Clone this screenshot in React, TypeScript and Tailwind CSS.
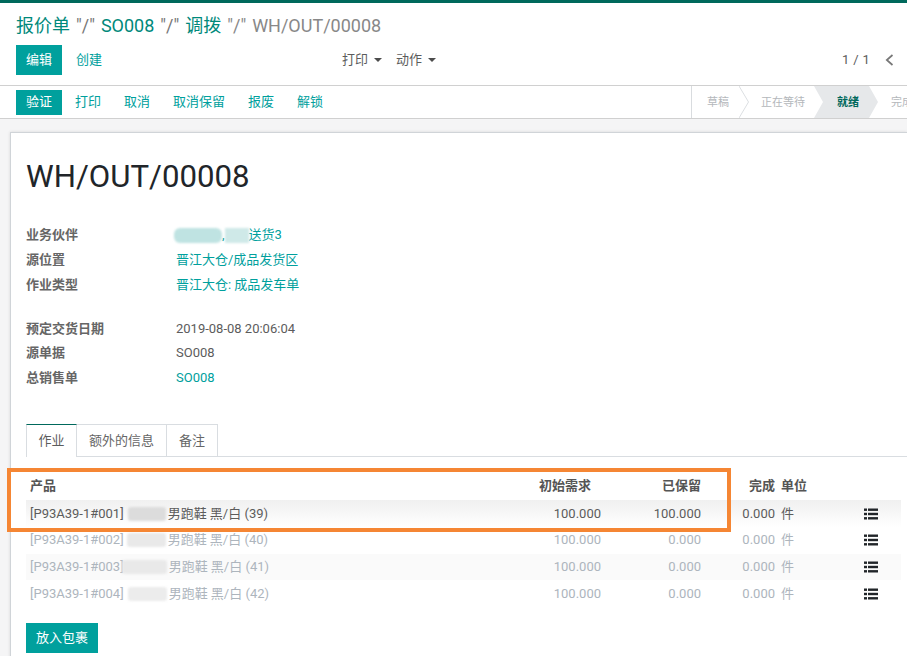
// ── Data ─────────────────────────────────────────────────────────────────────

const partnerFields = [
  { label: "源位置", value: "晋江大仓/成品发货区" },
  { label: "作业类型", value: "晋江大仓: 成品发车单" },
];

const rows = [
  { code: "[P93A39-1#001]", name: "男跑鞋 黑/白 (39)", reserved: "100.000", active: true, blur: "ml-[4px] w-[38px] bg-[#dcdcdc]" },
  { code: "[P93A39-1#002]", name: "男跑鞋 黑/白 (40)", reserved: "0.000", active: false, blur: "ml-[3px] w-[39px] bg-[#e9e9e9]" },
  { code: "[P93A39-1#003]", name: "男跑鞋 黑/白 (41)", reserved: "0.000", active: false, blur: "-ml-[2px] w-[45px] bg-[#e9e9e9]" },
  { code: "[P93A39-1#004]", name: "男跑鞋 黑/白 (42)", reserved: "0.000", active: false, blur: "ml-[4px] w-[39px] bg-[#ececec]" },
];

const actions = ["打印", "取消", "取消保留", "报废", "解锁"];

function ListIcon() {
  return (
    <svg width="14" height="12" viewBox="0 0 14 12" fill="#212529">
      <rect x="0" y="0.5" width="3" height="2.4" />
      <rect x="4" y="0.5" width="10" height="2.4" />
      <rect x="0" y="4.8" width="3" height="2.4" />
      <rect x="4" y="4.8" width="10" height="2.4" />
      <rect x="0" y="9.1" width="3" height="2.4" />
      <rect x="4" y="9.1" width="10" height="2.4" />
    </svg>
  );
}

// ── Component ────────────────────────────────────────────────────────────────

export default function App() {
  return (
    <div className="relative h-[656px] w-[907px] overflow-hidden bg-white font-['Roboto','Noto_Sans_CJK_SC',sans-serif] text-[13px] text-[#5c5c5c]">
      <div className="h-[3px] bg-[#00695c]" />

      {/* Control panel */}
      <div className="pl-4 pr-[13px] pt-[13px]">
        <div className="h-[20px] text-[18px] leading-[20px] text-[#00897b] [word-spacing:1.5px]">
          报价单 <span className="text-[#777]">"/"</span> SO008 <span className="text-[#777]">"/"</span> 调拨{" "}
          <span className="text-[#888]">"/" WH/OUT/00008</span>
        </div>
        <div className="mt-[9px] flex h-[40px] items-start">
          <button className="h-[30px] w-[46px] bg-[#00a09d] text-white">编辑</button>
          <button className="ml-[14px] h-[30px] text-[#00a09d]">创建</button>
          <div className="ml-[240px] flex h-[30px] items-center text-[#5c5c5c]">
            打印<span className="ml-[6px] mr-[14px] border-x-[4px] border-t-[4px] border-x-transparent border-t-[#4c4c4c]" />
            动作<span className="ml-[6px] border-x-[4px] border-t-[4px] border-x-transparent border-t-[#4c4c4c]" />
          </div>
          <div className="ml-auto flex h-[30px] items-center">
            <span className="tracking-[0.3px]">1 / 1</span>
            <svg className="ml-[15px]" width="9" height="12" viewBox="0 0 9 12" fill="none" stroke="#777" strokeWidth="1.7">
              <path d="M7.5 1 L1.8 6 L7.5 11" />
            </svg>
          </div>
        </div>
      </div>

      {/* Status bar */}
      <div className="flex h-[34px] items-center border-y border-[#d0d0d0] bg-white pl-4">
        <button className="h-[25px] w-[46px] bg-[#00a09d] text-white">验证</button>
        <div className="ml-[13px] flex gap-[23px] text-[#00a09d]">
          {actions.map((a) => (
            <span key={a}>{a}</span>
          ))}
        </div>
        <div className="ml-auto flex h-full w-[216px] shrink-0 border-l border-[#d9dcdf] text-[11px] leading-[33px] text-[#b4b7bb]">
          <span className="w-[47px] shrink-0 pl-[15px]">草稿</span>
          <svg className="shrink-0" width="10" height="32" viewBox="0 0 10 32" fill="none" stroke="#dcdfe2">
            <path d="M0 0 L9.5 16 L0 32" />
          </svg>
          <span className="w-[65px] shrink-0 whitespace-nowrap pl-[12px]">正在等待</span>
          <span className="w-[64px] shrink-0 bg-[#e6e8ea] pl-[23px] font-bold text-[#00695c] [clip-path:polygon(0_0,55px_0,100%_50%,55px_100%,0_100%,9px_50%)]">
            就绪
          </span>
          <span className="ml-[13px] w-[16px] shrink-0 overflow-hidden whitespace-nowrap">完成</span>
        </div>
      </div>

      {/* Sheet */}
      <div className="h-full bg-[#f5f5f6] pl-[10px] pt-[13px]">
        <div className="h-full border-l border-t border-[#d0d4d8] bg-white pl-[15px] shadow-[0_0_3px_rgba(0,0,0,0.12)]">
          <h1 className="pt-[22px] text-[31.2px] font-normal leading-[44px] text-[#212529]">WH/OUT/00008</h1>

          <div className="mt-[27px] grid grid-cols-[150px_1fr] gap-y-[6.8px] leading-[18px]">
            <span className="font-bold text-[#666]">业务伙伴</span>
            <span className="flex items-center text-[#00a09d]">
              <span className="-ml-[2px] h-[15px] w-[48px] rounded-[6px] bg-[#bfe3e2] blur-[1px]" />,
              <span className="h-[15px] w-[24px] bg-[#cfe9e8] blur-[1px]" />
              送货3
            </span>
            {partnerFields.map((f) => (
              <div key={f.label} className="contents">
                <span className="font-bold text-[#666]">{f.label}</span>
                <span className="text-[#00a09d]">{f.value}</span>
              </div>
            ))}
          </div>

          <div className="mt-[26px] grid grid-cols-[150px_1fr] gap-y-[6.8px] leading-[18px]">
            <span className="font-bold text-[#666]">预定交货日期</span>
            <span>2019-08-08 20:06:04</span>
            <span className="font-bold text-[#666]">源单据</span>
            <span>SO008</span>
            <span className="font-bold text-[#666]">总销售单</span>
            <span className="text-[#00a09d]">SO008</span>
          </div>

          {/* Tabs */}
          <div className="mt-[37px] flex h-[33px] border-b border-[#d9dde1]">
            <span className="z-10 -mb-px flex w-[51px] items-center justify-center border-x border-t border-x-[#d9dde1] border-t-[#00695c] bg-white">作业</span>
            <span className="-mb-px flex w-[90px] items-center justify-center border-r border-t border-[#d9dde1] text-[#666]">额外的信息</span>
            <span className="-mb-px flex w-[51px] items-center justify-center border-r border-t border-[#d9dde1] text-[#666]">备注</span>
          </div>

          {/* Move lines */}
          <table className="mt-[15px] w-[875px] table-fixed border-collapse">
            <thead>
              <tr className="h-[28px] font-bold text-[#555]">
                <th className="w-[460px] pl-[4px] text-left">产品</th>
                <th className="w-[115px] pr-[10px] text-right">初始需求</th>
                <th className="w-[100px] text-right">已保留</th>
                <th className="w-[74px] text-right">完成</th>
                <th className="w-[70px] pl-[6px] text-left">单位</th>
                <th />
              </tr>
            </thead>
            <tbody>
              {rows.map((r, i) => (
                <tr
                  key={r.code}
                  className={`h-[26.7px] ${r.active ? "text-[#5c5c5c]" : "text-[#adb5bd]"} ${
                    i === 0 ? "bg-gradient-to-b from-[#f0f0f0] to-white" : i === 2 ? "bg-[#fafafa]" : ""
                  }`}
                >
                  <td className="pl-[4px]">
                    <span className="flex items-center whitespace-nowrap">
                      {r.code}
                      <span className={`mr-[2px] h-[14px] rounded-[3px] blur-[1px] ${r.blur}`} />
                      {r.name}
                    </span>
                  </td>
                  <td className="text-right">100.000</td>
                  <td className="text-right">{r.reserved}</td>
                  <td className="text-right">0.000</td>
                  <td className="pl-[6px]">件</td>
                  <td className="pl-[19px]">
                    <ListIcon />
                  </td>
                </tr>
              ))}
            </tbody>
          </table>

          <button className="mt-[16px] h-[30px] w-[72px] bg-[#00a09d] text-white">放入包裹</button>
        </div>
      </div>

      {/* Orange annotation box */}
      <div className="absolute left-[7px] top-[468px] h-[64px] w-[724px] border-[4px] border-[#f58634]" />
    </div>
  );
}
